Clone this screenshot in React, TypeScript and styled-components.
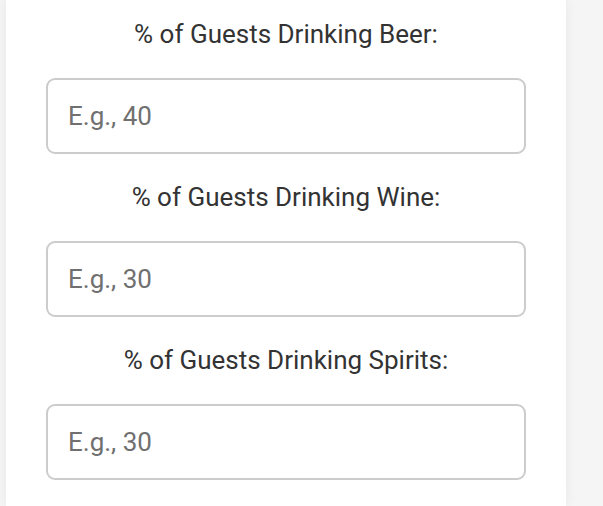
import React from 'react';
import styled, { createGlobalStyle } from 'styled-components';

const GlobalStyle = createGlobalStyle`
  html, body {
    margin: 0;
    padding: 0;
    background: #f5f5f5;
    font-family: Roboto, 'Liberation Sans', Arial, sans-serif;
  }
`;

const fields = [
  { id: 'beer', label: '% of Guests Drinking Beer:', placeholder: 'E.g., 40' },
  { id: 'wine', label: '% of Guests Drinking Wine:', placeholder: 'E.g., 30' },
  { id: 'spirits', label: '% of Guests Drinking Spirits:', placeholder: 'E.g., 30' },
];

const App: React.FC = () => {
  return (
    <>
      <GlobalStyle />
      <Page>
        <Card>
          {fields.map((f) => (
            <Field key={f.id}>
              <Label htmlFor={f.id}>{f.label}</Label>
              <Input id={f.id} type="number" placeholder={f.placeholder} />
            </Field>
          ))}
        </Card>
      </Page>
    </>
  );
};

const Page = styled.div`
  min-height: 506px;
  padding-left: 6px;
  overflow: hidden;
`;

const Card = styled.div`
  width: 560px;
  min-height: 506px;
  box-sizing: border-box;
  background: #ffffff;
  box-shadow: 0 0 12px rgba(0, 0, 0, 0.06);
  padding: 17px 40px 0;
  display: flex;
  flex-direction: column;
  gap: 26px;
`;

const Field = styled.div`
  display: flex;
  flex-direction: column;
  gap: 27px;
`;

const Label = styled.label`
  display: block;
  text-align: center;
  font-size: 26px;
  line-height: 34px;
  color: #333333;
`;

const Input = styled.input`
  box-sizing: border-box;
  width: 480px;
  height: 76px;
  padding: 0 20px;
  border: 2px solid #cccccc;
  border-radius: 9px;
  font-family: Roboto, 'Liberation Sans', Arial, sans-serif;
  font-size: 26px;
  color: #333333;
  background: #ffffff;
  outline: none;
  appearance: textfield;
  &::placeholder {
    color: #707070;
  }
  &::-webkit-inner-spin-button,
  &::-webkit-outer-spin-button {
    -webkit-appearance: none;
    margin: 0;
  }
`;

export default App;
